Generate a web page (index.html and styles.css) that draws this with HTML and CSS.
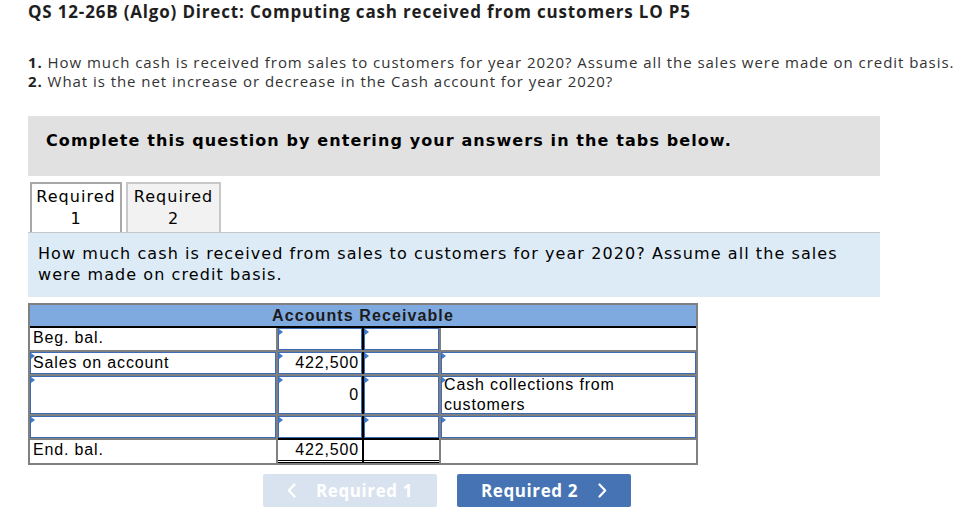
FILE: index.html
```html
<!DOCTYPE html>
<html>
<head>
<meta charset="utf-8">
<link rel="stylesheet" href="styles.css">
</head>
<body>
<div class="page">
  <h1 class="title">QS 12-26B (Algo) Direct: Computing cash received from customers LO P5</h1>
  <div class="questions">
    <p><b>1.</b> How much cash is received from sales to customers for year 2020? Assume all the sales were made on credit basis.</p>
    <p><b>2.</b> What is the net increase or decrease in the Cash account for year 2020?</p>
  </div>
  <div class="instructions">Complete this question by entering your answers in the tabs below.</div>
  <div class="tabs">
    <div class="tab active">Required<br>1</div>
    <div class="tab">Required<br>2</div>
  </div>
  <div class="prompt">How much cash is received from sales to customers for year 2020? Assume all the sales were made on credit basis.</div>
  <div class="taccount">
    <div class="thead">Accounts Receivable</div>

    <div class="cell">Beg. bal.</div>
    <div class="cell inp dr"></div>
    <div class="cell inp"></div>
    <div class="cell"></div>

    <div class="cell inp">Sales on account</div>
    <div class="cell inp dr num">422,500</div>
    <div class="cell inp"></div>
    <div class="cell inp"></div>

    <div class="cell inp"></div>
    <div class="cell inp dr num mid">0</div>
    <div class="cell inp"></div>
    <div class="cell inp wrap"><span class="wrap-text">Cash collections from customers</span></div>

    <div class="cell inp"></div>
    <div class="cell inp dr"></div>
    <div class="cell inp"></div>
    <div class="cell inp"></div>

    <div class="cell">End. bal.</div>
    <div class="cell dr num total">422,500</div>
    <div class="cell total"></div>
    <div class="cell"></div>
  </div>
  <div class="nav">
    <button class="btn prev">
      <svg class="chev" width="9" height="15" viewBox="0 0 9 15"><path d="M7.5 1.5 L1.8 7.5 L7.5 13.5" fill="none" stroke="#fff" stroke-width="2.2" stroke-linecap="round" stroke-linejoin="round"/></svg>
      <span>Required 1</span>
    </button>
    <button class="btn next">
      <span>Required 2</span>
      <svg class="chev" width="9" height="15" viewBox="0 0 9 15"><path d="M1.5 1.5 L7.2 7.5 L1.5 13.5" fill="none" stroke="#fff" stroke-width="2.2" stroke-linecap="round" stroke-linejoin="round"/></svg>
    </button>
  </div>
</div>
</body>
</html>
```

FILE: styles.css
```css
* { box-sizing: border-box; }
html, body { margin: 0; padding: 0; background: #fff; }
.page {
  padding: 1px 0 0 28px;
  font-family: "Open Sans", "Liberation Sans", sans-serif;
  color: #222;
}
.title {
  margin: 0;
  font-size: 17px;
  font-weight: 700;
  line-height: 22px;
  letter-spacing: 0.82px;
  color: #1e1e1e;
}
.questions {
  margin-top: 30px;
  font-size: 15px;
  line-height: 19px;
  letter-spacing: 0.95px;
  color: #333;
}
.questions p { margin: 0; }
.questions b { color: #222; }
.instructions {
  margin-top: 25px;
  width: 852px;
  height: 60px;
  background: #e1e1e1;
  padding: 15px 0 0 18px;
  line-height: 20px;
  font-family: "DejaVu Sans", Verdana, sans-serif;
  font-weight: 700;
  font-size: 16px;
  letter-spacing: 1.1px;
  color: #000;
}
.tabs {
  display: flex;
  gap: 4px;
  margin-top: 6px;
  padding-left: 2px;
  font-family: "DejaVu Sans", Verdana, sans-serif;
  font-size: 16px;
  line-height: 22px;
  letter-spacing: 1.05px;
  color: #000;
}
.tab {
  width: 95px;
  height: 50px;
  text-align: center;
  border: 2px solid #c8c8c8;
  border-bottom: none;
  background: #f2f2f2;
  padding-top: 2px;
}
.tab.active {
  width: 92px;
  background: #fff;
  border-color: #a8a8a8;
}
.prompt {
  width: 852px;
  background: #ddebf7;
  border-top: 1px solid #c6c6c6;
  padding: 10px 10px 12px 10px;
  font-family: "DejaVu Sans", Verdana, sans-serif;
  font-size: 16px;
  line-height: 21px;
  letter-spacing: 1.08px;
  color: #000;
}
.taccount {
  margin-top: 6px;
  width: 670px;
  display: grid;
  grid-template-columns: 246px 84px 75px 255px;
  grid-template-rows: 21px 22px 22px 38px 22px 23px;
  gap: 2px;
  background: #808080;
  border: 2px solid #808080;
  font-family: "Liberation Sans", Arial, sans-serif;
  font-size: 16px;
  letter-spacing: 0.85px;
  color: #000;
}
.thead {
  grid-column: 1 / -1;
  background: #7faadf;
  text-align: center;
  font-weight: 700;
  line-height: 21px;
  letter-spacing: 1.1px;
  color: #1b1b1b;
  box-shadow: 0 2px 0 #000;
}
.cell {
  background: #fff;
  position: relative;
  padding: 0 3px;
  line-height: 20px;
}
.cell.inp { border: 1px solid #3f6ab4; padding: 0 2px; }
.cell.inp::before {
  content: "";
  position: absolute;
  left: 0;
  top: 0;
  width: 0;
  height: 0;
  border-style: solid;
  border-width: 3px 0 3px 4px;
  border-color: transparent transparent transparent #3f7bd0;
}
.cell.dr { box-shadow: 2px 0 0 #000; }
.num { text-align: right; }
.cell.mid { line-height: 36px; }
.cell.wrap { line-height: 20px; padding-right: 30px; }
.wrap-text { display: block; margin-top: -2px; }
.cell.total {
  box-shadow: 0 -2px 0 #000;
  border-bottom: 3px double #000;
  line-height: 19px;
}
.cell.dr.total { box-shadow: 0 -2px 0 #000, 2px 0 0 #000, 2px -2px 0 #000; }
.nav {
  display: flex;
  gap: 20px;
  margin: 9px 0 0 235px;
}
.btn {
  width: 174px;
  height: 33px;
  border: none;
  border-radius: 2px;
  display: flex;
  align-items: center;
  justify-content: center;
  gap: 20px;
  font-family: "Open Sans", "Liberation Sans", sans-serif;
  font-weight: 700;
  font-size: 17px;
  letter-spacing: 0.6px;
  color: #fff;
  cursor: pointer;
  padding: 0;
}
.btn.prev { background: #d9e3f0; }
.btn.next { background: #4573b3; padding-left: 0; }
.chev { display: block; }
```
